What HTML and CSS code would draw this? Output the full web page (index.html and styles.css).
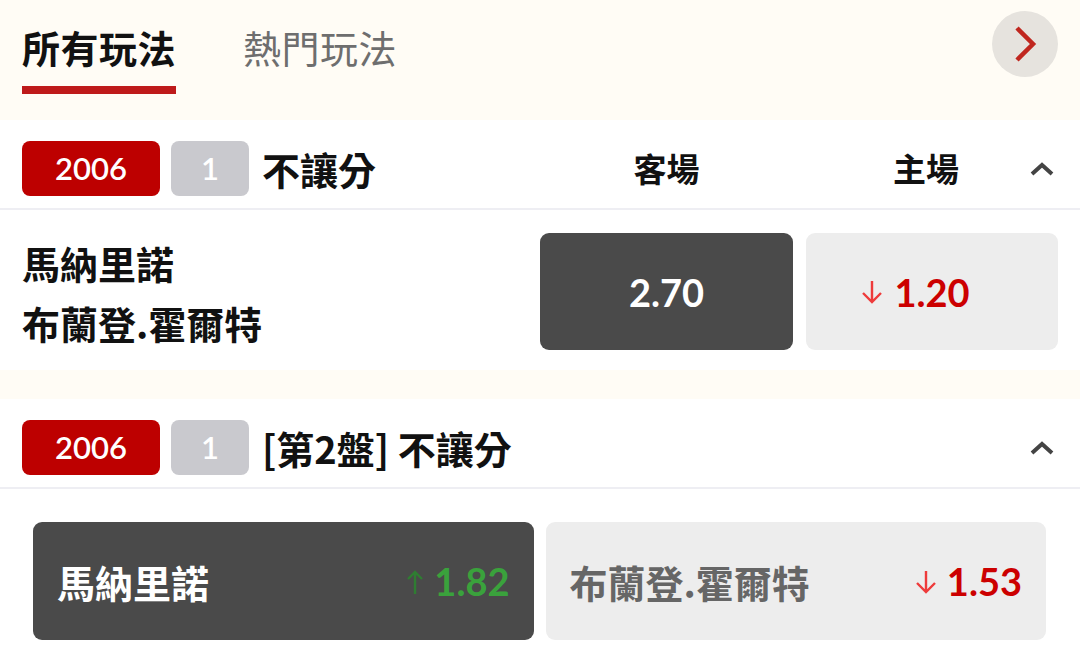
FILE: index.html
```html
<!DOCTYPE html>
<html lang="zh-Hant">
<head>
<meta charset="utf-8">
<link rel="stylesheet" href="styles.css">
</head>
<body>
<div class="tabs">
  <div class="tab active">所有玩法</div>
  <div class="tab">熱門玩法</div>
  <div class="next">
    <svg width="66" height="66" viewBox="0 0 66 66"><path d="M25 17 L41 33 L25 49" fill="none" stroke="#c0271f" stroke-width="4.5"/></svg>
  </div>
</div>

<div class="section">
  <div class="sec-head">
    <span class="badge red">2006</span>
    <span class="badge gray">1</span>
    <span class="title">不讓分</span>
    <span class="col-label c1">客場</span>
    <span class="col-label c2">主場</span>
    <svg class="caret" width="26" height="18" viewBox="0 0 26 18"><path d="M3 14 L13 5 L23 14" fill="none" stroke="#444" stroke-width="4"/></svg>
  </div>
  <div class="row1">
    <div class="names">
      <div>馬納里諾</div>
      <div>布蘭登.霍爾特</div>
    </div>
    <div class="odd dark w1"><span class="num">2.70</span></div>
    <div class="odd light w2">
      <span class="num red with-arrow">
        <svg class="arrow down" width="22" height="24" viewBox="0 0 22 24"><path d="M11 1 V22 M2 13 L11 22 L20 13" fill="none" stroke="#ee3b3b" stroke-width="2.4"/></svg>
        1.20
      </span>
    </div>
  </div>
</div>

<div class="gap"></div>

<div class="section">
  <div class="sec-head">
    <span class="badge red">2006</span>
    <span class="badge gray">1</span>
    <span class="title">[第2盤] 不讓分</span>
    <svg class="caret" width="26" height="18" viewBox="0 0 26 18"><path d="M3 14 L13 5 L23 14" fill="none" stroke="#444" stroke-width="4"/></svg>
  </div>
  <div class="row2">
    <div class="sel dark">
      <span class="sel-name">馬納里諾</span>
      <span class="sel-odd">
        <svg class="arrow" width="18" height="26" viewBox="0 0 18 26"><path d="M9 25 V3 M2 10 L9 3 L16 10" fill="none" stroke="#2f7d32" stroke-width="2.4"/></svg>
        <span class="num green">1.82</span>
      </span>
    </div>
    <div class="sel light">
      <span class="sel-name grayname">布蘭登.霍爾特</span>
      <span class="sel-odd">
        <svg class="arrow" width="22" height="24" viewBox="0 0 22 24"><path d="M11 1 V22 M2 13 L11 22 L20 13" fill="none" stroke="#ee3b3b" stroke-width="2.4"/></svg>
        <span class="num red">1.53</span>
      </span>
    </div>
  </div>
</div>
</body>
</html>
```

FILE: styles.css
```css
* { box-sizing: border-box; }
html, body { margin: 0; padding: 0; }
body {
  width: 1080px;
  height: 662px;
  overflow: hidden;
  background: #fffcf5;
  font-family: "Noto Sans CJK TC", "Noto Sans CJK SC", sans-serif;
  color: #111;
}
.tabs {
  height: 120px;
  display: flex;
  align-items: flex-start;
  padding-left: 22px;
  position: relative;
}
.tab {
  font-size: 38px;
  line-height: 1;
  padding-top: 28px;
  height: 94px;
  color: #6e6e6e;
  margin-right: 67px;
  letter-spacing: 0.5px;
}
.tab.active {
  color: #111;
  font-weight: 700;
  border-bottom: 8px solid #be1a1a;
}
.next {
  position: absolute;
  left: 992px;
  top: 11px;
  width: 66px;
  height: 66px;
  border-radius: 50%;
  background: #e6e3de;
}
.next svg { display: block; }
.section {
  background: #fff;
}
.sec-head {
  height: 90px;
  padding-top: 8px;
  border-bottom: 2px solid #eeeef3;
  display: flex;
  align-items: center;
  padding-left: 22px;
  position: relative;
}
.badge {
  height: 55px;
  border-radius: 8px;
  display: flex;
  align-items: center;
  justify-content: center;
  font-family: "Lato", "Liberation Sans", sans-serif;
  font-size: 31px;
  font-weight: 600;
  color: #fff;
}
.badge.red { width: 138px; background: #bd0000; }
.badge.gray { width: 78px; background: #c9c9ce; margin-left: 11px; }
.title {
  font-size: 38px;
  font-weight: 700;
  margin-left: 13px;
  flex: 1;
  white-space: nowrap;
}
.col-label {
  font-size: 33px;
  font-weight: 700;
  text-align: center;
}
.col-label.c1 { width: 253px; }
.col-label.c2 { width: 240px; margin-left: 13px; margin-right: 34px; }
.caret {
  position: absolute;
  right: 25px;
  top: 40px;
}
.row1 {
  display: flex;
  align-items: flex-start;
  padding: 23px 22px 0 22px;
  height: 160px;
}
.names {
  flex: 1;
  font-size: 38px;
  font-weight: 700;
  line-height: 60px;
}
.odd {
  height: 117px;
  border-radius: 9px;
  display: flex;
  align-items: center;
  justify-content: center;
}
.w1 { width: 253px; }
.w2 { width: 252px; margin-left: 13px; }
.dark { background: #4a4a4a; color: #fff; }
.light { background: #ededed; }
.num {
  font-family: "Lato", "Liberation Sans", sans-serif;
  font-weight: 700;
  font-size: 38px;
}
.num.red { color: #cc0000; }
.num.green { color: #3aa23c; }
.with-arrow { position: relative; }
.arrow.down {
  position: absolute;
  right: 100%;
  margin-right: 11px;
  top: 11px;
}
.sel-odd .arrow { margin-right: 10px; margin-top: 2px; }
.gap {
  height: 29px;
  background: #fffcf5;
}
.row2 {
  display: flex;
  gap: 12px;
  padding: 33px 34px 0 33px;
  height: 175px;
}
.sel {
  flex: 1;
  height: 118px;
  border-radius: 9px;
  display: flex;
  align-items: center;
  justify-content: space-between;
  padding: 0 24px 0 24px;
}
.sel-name {
  font-size: 38px;
  font-weight: 700;
}
.grayname { color: #666; }
.sel-odd { display: flex; align-items: center; }
```
